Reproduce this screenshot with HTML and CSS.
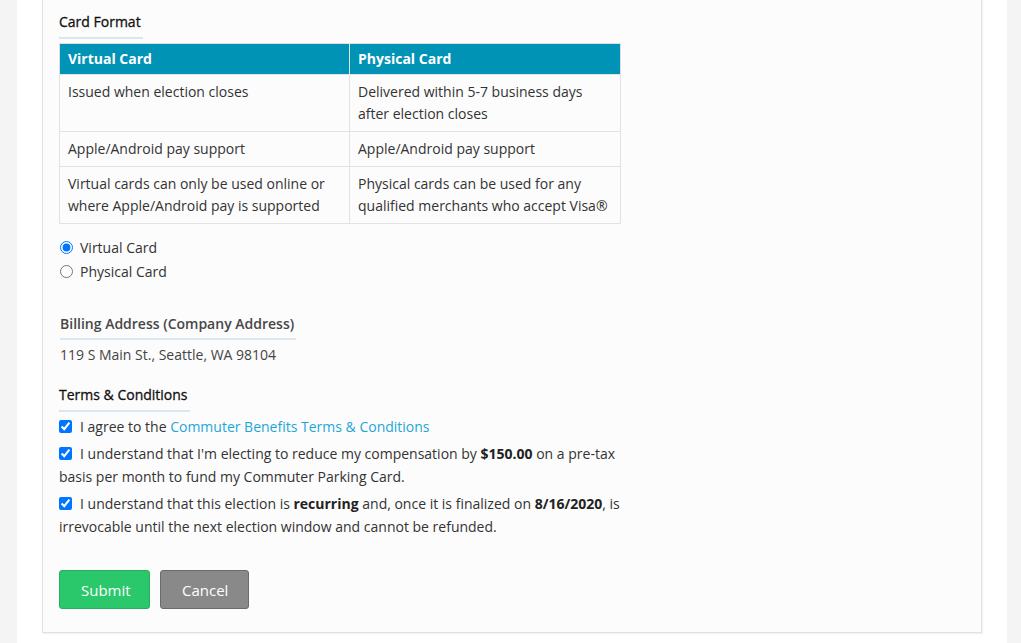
FILE: index.html
```html
<!DOCTYPE html>
<html>
<head>
<meta charset="utf-8">
<link rel="stylesheet" href="styles.css">
</head>
<body>
<div class="page">
  <div class="card">
    <div class="section-title first">Card Format</div>
    <table class="formats">
      <thead>
        <tr><th class="c1">Virtual Card</th><th class="c2">Physical Card</th></tr>
      </thead>
      <tbody>
        <tr><td>Issued when election closes</td><td>Delivered within 5-7 business days after election closes</td></tr>
        <tr><td>Apple/Android pay support</td><td>Apple/Android pay support</td></tr>
        <tr><td>Virtual cards can only be used online or where Apple/Android pay is supported</td><td>Physical cards can be used for any qualified merchants who accept Visa®</td></tr>
      </tbody>
    </table>
    <div class="radios">
      <label class="radio"><input type="radio" name="fmt" checked><span>Virtual Card</span></label>
      <label class="radio"><input type="radio" name="fmt"><span>Physical Card</span></label>
    </div>
    <div class="section-title billing">Billing Address (Company Address)</div>
    <div class="address">119 S Main St., Seattle, WA 98104</div>
    <div class="section-title terms">Terms &amp; Conditions</div>
    <div class="checks">
      <label class="check"><input type="checkbox" checked>I agree to the <a class="link" href="#">Commuter Benefits Terms &amp; Conditions</a></label>
      <label class="check"><input type="checkbox" checked>I understand that I'm electing to reduce my compensation by <b>$150.00</b> on a pre-tax basis per month to fund my Commuter Parking Card.</label>
      <label class="check"><input type="checkbox" checked>I understand that this election is <b>recurring</b> and, once it is finalized on <b>8/16/2020</b>, is irrevocable until the next election window and cannot be refunded.</label>
    </div>
    <div class="actions">
      <button class="btn btn-submit">Submit</button>
      <button class="btn btn-cancel">Cancel</button>
    </div>
  </div>
</div>
</body>
</html>
```

FILE: styles.css
```css
html, body {
  margin: 0;
  padding: 0;
}
body {
  background: #f4f4f4;
  font-family: "Open Sans", "Liberation Sans", sans-serif;
  font-size: 14px;
  color: #333;
}
.page {
  margin-left: 17px;
  width: 990px;
  box-sizing: border-box;
  background: #fff;
  padding: 0 25px 10px 25px;
}
.card {
  background: #fcfcfc;
  border: 1px solid #d9e3eb;
  border-top: none;
  box-shadow: 1px 1px 1px rgba(0, 0, 0, 0.05);
  padding: 0 16px 23px 16px;
}
.section-title {
  display: inline-block;
  font-weight: 500;
  line-height: 20px;
  padding: 0 2px 5px 0;
  border-bottom: 2px solid #dbe7ef;
  color: #111;
  -webkit-text-stroke: 0.3px #111;
}
.section-title.first {
  margin-top: 12px;
}
.formats {
  display: table;
  margin-top: 4px;
  border-collapse: collapse;
  border: 1px solid #dedede;
  width: 562px;
}
.formats th {
  background: #0093b6;
  color: #fff;
  text-align: left;
  font-weight: 700;
  line-height: 22px;
  padding: 4px 8px;
  border-left: 1px solid #e6e6e6;
}
.formats th.c1 {
  width: 273px;
  border-left: none;
}
.formats td {
  vertical-align: top;
  line-height: 22px;
  padding: 6px 8px;
  border: 1px solid #e2e2e2;
}
.radios {
  margin-top: 11px;
  display: flex;
  flex-direction: column;
}
.radio {
  display: flex;
  align-items: center;
  height: 24px;
}
.radio input {
  margin: 0 7px 0 1px;
  width: 13px;
  height: 13px;
}
.section-title.billing {
  margin-top: 31px;
  margin-left: 1px;
  color: #474747;
  -webkit-text-stroke: 0;
  font-weight: 600;
  padding-bottom: 4px;
}
.address {
  display: block;
  margin-top: 4px;
  margin-left: 1px;
  line-height: 22px;
  color: #444;
}
.section-title.terms {
  margin-top: 19px;
  padding-bottom: 5px;
}
.checks {
  margin-top: 3px;
  width: 566px;
}
.check {
  display: block;
  line-height: 23px;
  margin-bottom: 4px;
}
.check input {
  margin: 0 8px 0 0;
  width: 13px;
  height: 13px;
  vertical-align: -1px;
}
.check b {
  font-weight: 700;
  color: #222;
}
.link {
  color: #1ea6d8;
  text-decoration: none;
}
.actions {
  margin-top: 32px;
  display: flex;
  gap: 10px;
}
.btn {
  font-family: "Open Sans", "Liberation Sans", sans-serif;
  font-size: 15px;
  color: #fff;
  height: 39px;
  border-radius: 3px;
  padding: 0 21px;
  cursor: pointer;
}
.btn-submit {
  background: #2ac76b;
  border: 1px solid #25b05f;
  width: 91px;
}
.btn-cancel {
  background: #898989;
  border: 1px solid #6b6b6b;
  width: 89px;
}
```
